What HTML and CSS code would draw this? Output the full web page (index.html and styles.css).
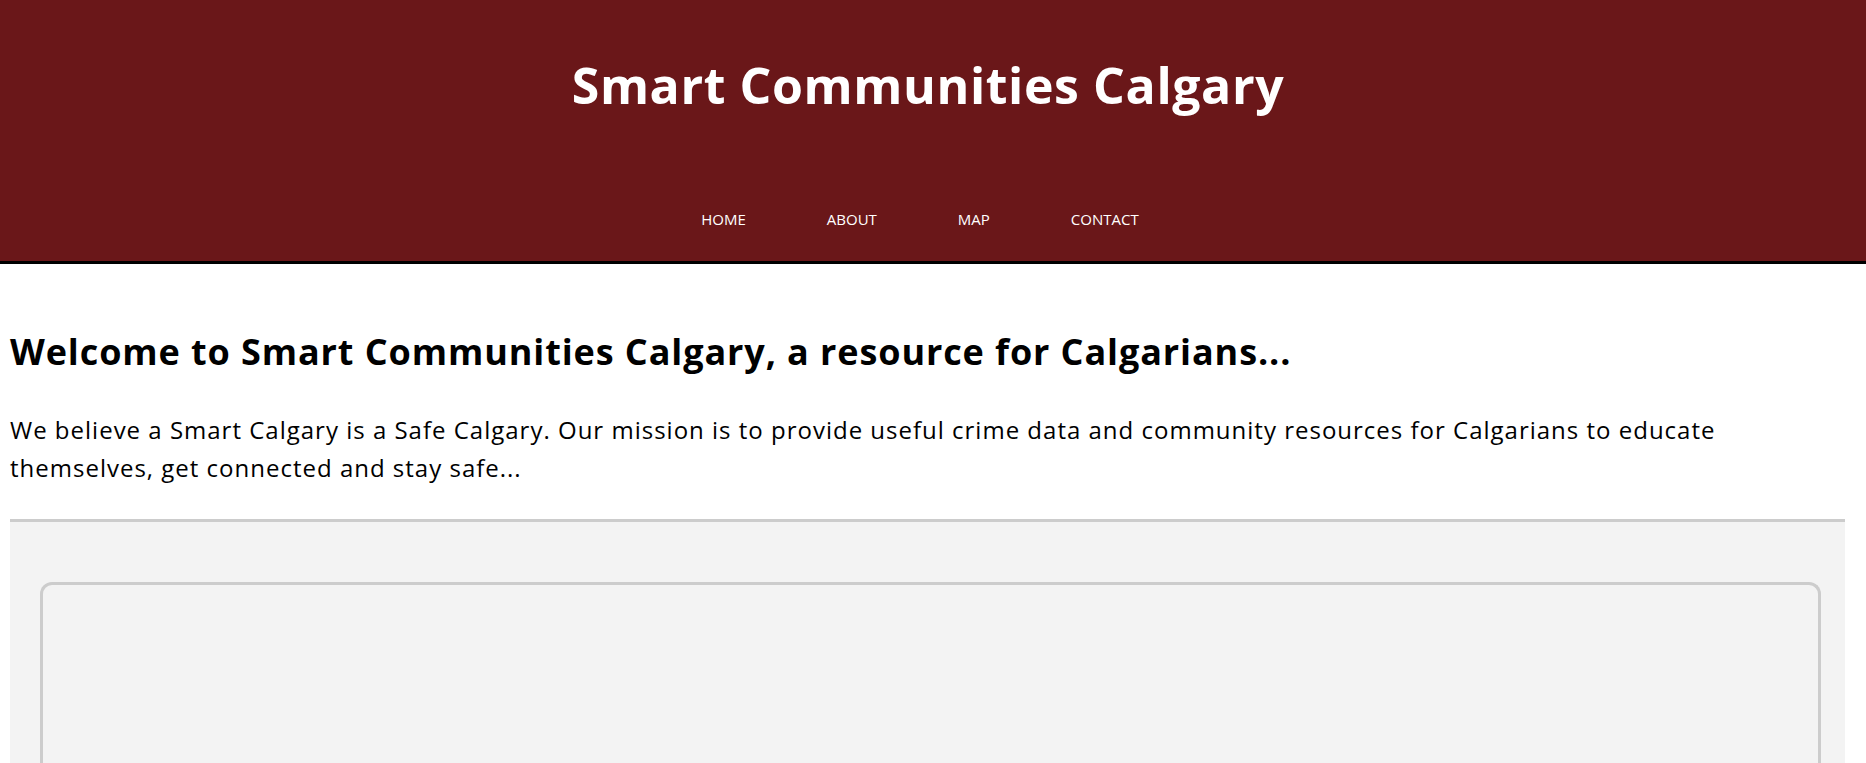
FILE: index.html
```html
<!DOCTYPE html>
<html lang="en">
<head>
<meta charset="utf-8">
<title>Smart Communities Calgary</title>
<link rel="stylesheet" href="styles.css">
</head>
<body>
<header class="site-header">
  <h1 class="site-title">Smart Communities Calgary</h1>
  <nav class="site-nav">
    <ul class="nav-list">
      <li><a href="#" class="nav-link">HOME</a></li>
      <li><a href="#" class="nav-link">ABOUT</a></li>
      <li><a href="#" class="nav-link">MAP</a></li>
      <li><a href="#" class="nav-link">CONTACT</a></li>
    </ul>
  </nav>
</header>
<main class="main">
  <h2 class="welcome">Welcome to Smart Communities Calgary, a resource for Calgarians...</h2>
  <p class="intro">We believe a Smart Calgary is a Safe Calgary. Our mission is to provide useful crime data and community resources for Calgarians to educate themselves, get connected and stay safe...</p>
  <section class="panel">
    <div class="panel-box"></div>
  </section>
</main>
</body>
</html>
```
FILE: styles.css
```css
html, body {
  margin: 0;
  padding: 0;
  background: #ffffff;
  font-family: "Open Sans", "Noto Sans", sans-serif;
  color: #000;
}

.site-header {
  background: #6a1719;
  border-bottom: 3px solid #000;
  height: 261px;
  display: flex;
  flex-direction: column;
  align-items: center;
}

.site-title {
  margin: 0;
  padding: 55px 10px 0 0;
  font-size: 50px;
  line-height: 60px;
  font-weight: 700;
  color: #fff;
  letter-spacing: 0.6px;
}

.site-nav {
  margin-top: 94px;
  padding-right: 26px;
}

.nav-list {
  list-style: none;
  margin: 0;
  padding: 0;
  display: flex;
  gap: 81px;
}

.nav-link {
  color: #fff;
  text-decoration: none;
  font-size: 15px;
  line-height: 20px;
  display: block;
}

.main {
  padding: 0 21px 0 10px;
}

.welcome {
  margin: 66px 0 0;
  font-size: 36px;
  line-height: 44px;
  font-weight: 700;
  letter-spacing: 0.9px;
}

.intro {
  margin: 37px 0 0;
  font-size: 24px;
  line-height: 38px;
  letter-spacing: 1px;
  max-width: 1760px;
}

.panel {
  margin-top: 32px;
  border-top: 3px solid #cccccc;
  background: #f3f3f3;
  height: 260px;
  padding: 60px 24px 0 30px;
}

.panel-box {
  border: 3px solid #cccccc;
  border-bottom: none;
  border-radius: 12px 12px 0 0;
  height: 100%;
}
```
